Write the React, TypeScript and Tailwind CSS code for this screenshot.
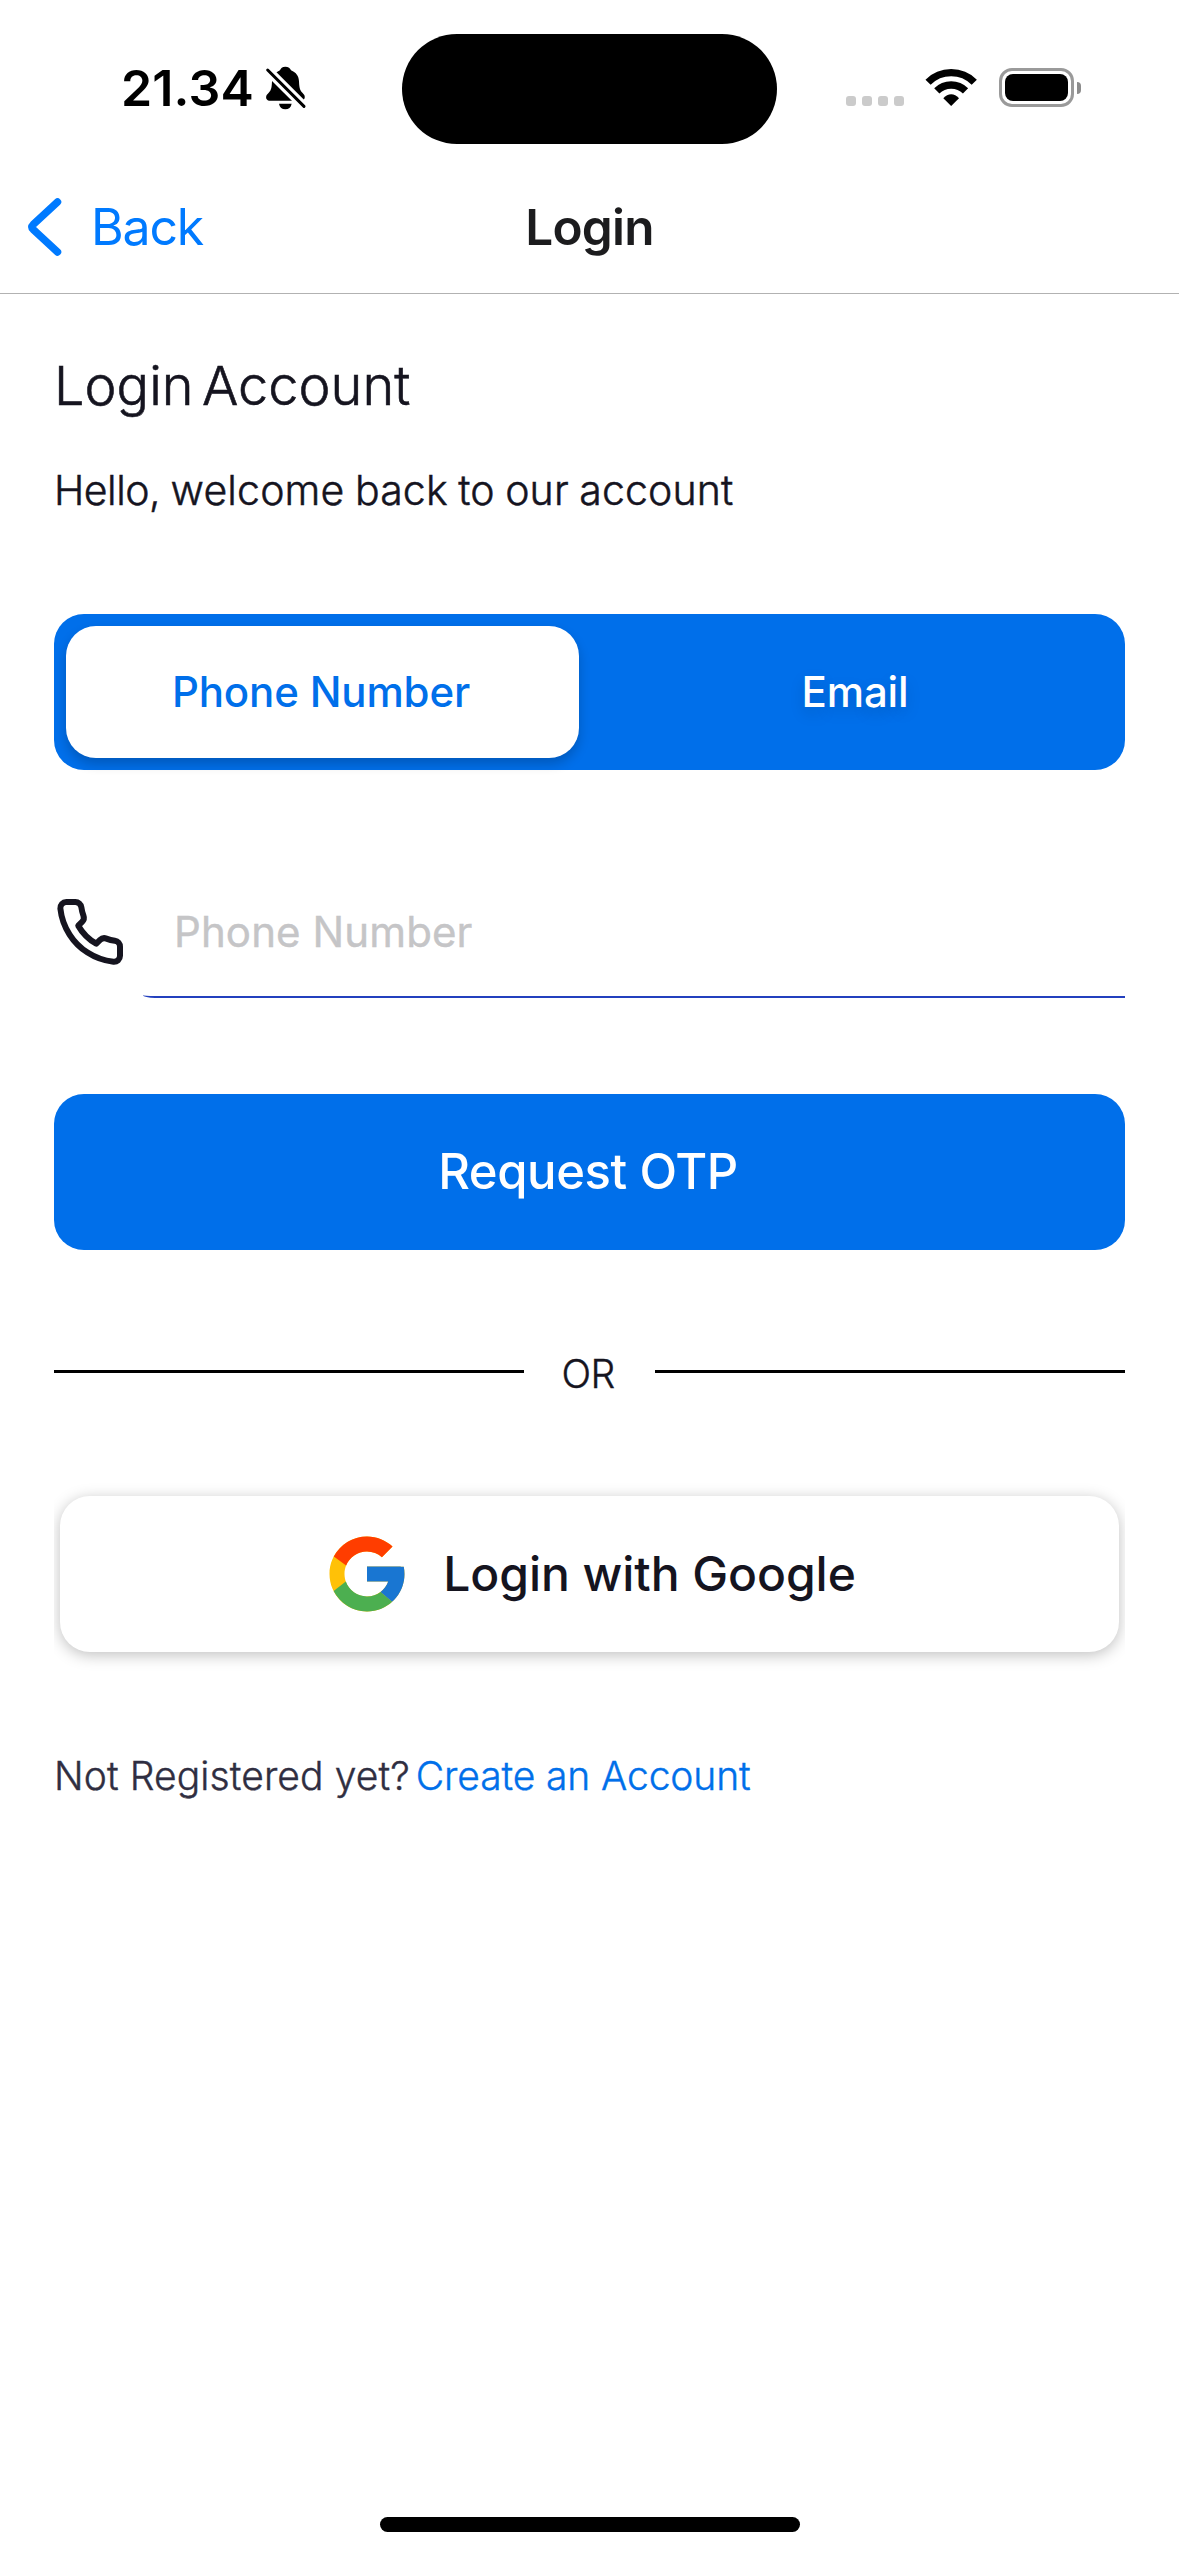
import type { ReactNode } from "react";
import { FcGoogle } from "react-icons/fc";
import { FiPhone } from "react-icons/fi";

function SilentBell() {
  return (
    <svg className="ml-[11px] h-[45px] w-[42px]" viewBox="524 136 126 135" aria-hidden="true">
      <path
        d="M585 141c-9 0-14 5-16 11-15 7-23 17-24 33-1 24-3 28-14 39-6 6-5 19 6 19h96c11 0 13-13 7-19-11-12-13-15-14-39-1-16-8-26-24-33-2-6-8-11-17-11z"
        fill="#000"
      />
      <path d="M566 252h38c-2 11-9 17-19 17s-17-6-19-17z" fill="#000" />
      <path d="M522 141L656 275" stroke="#fff" strokeWidth="28" />
      <path d="M532 151L641 260" stroke="#000" strokeWidth="9" strokeLinecap="round" />
    </svg>
  );
}

function Wifi() {
  return (
    <svg className="h-[39px] w-[52px]" viewBox="496 144 156 117" fill="none" stroke="#000" aria-hidden="true">
      <path d="M505.2 186.7A98 98 0 0 1 643.8 186.7" strokeWidth="22" />
      <path d="M531.4 212.9A61 61 0 0 1 617.6 212.9" strokeWidth="22" />
      <path d="M574.5 258L551 234.5C565 218.5 584 218.5 598 234.5Z" fill="#000" stroke="none" />
    </svg>
  );
}

function Battery() {
  return (
    <div className="flex items-center gap-[3px]">
      <div className="h-[39px] w-[75px] rounded-[13px] border-[3px] border-[#9a9a9a] p-[3px]">
        <div className="h-full w-full rounded-[8px] bg-black" />
      </div>
      <div className="h-[12px] w-[4px] rounded-r-full bg-[#8c8c8c]" />
    </div>
  );
}

function StatusBar() {
  return (
    <div className="grid h-[162px] grid-cols-[402px_375px_402px] pt-[34px]">
      <div className="flex h-[107px] items-center pl-[121px]">
        <span className="text-[50px] font-semibold leading-none tracking-[0.15px] text-black">21.34</span>
        <SilentBell />
      </div>
      <div className="h-[110px] rounded-full bg-black" />
      <div className="flex h-[107px] items-center pl-[69px]">
        <div className="flex gap-[6px] pt-[27px]">
          {[0, 1, 2, 3].map((dot) => (
            <span key={dot} className="size-[10px] rounded-[3px] bg-[#cbcbcb]" />
          ))}
        </div>
        <div className="ml-[21px] mr-[22px]">
          <Wifi />
        </div>
        <Battery />
      </div>
    </div>
  );
}

function NavBar() {
  return (
    <header className="grid h-[132px] grid-cols-3 items-center border-b border-[#b2b2b2]">
      <a href="#back" className="flex items-center pl-[24px] text-[#007aff]">
        <svg className="mb-[2px] h-[64px] w-[40px]" viewBox="0 0 40 64" fill="none" aria-hidden="true">
          <path
            d="M33.5 7L9.2 29.6Q6.8 32 9.2 34.4L33.5 57"
            stroke="currentColor"
            strokeWidth="7.5"
            strokeLinecap="round"
            strokeLinejoin="round"
          />
        </svg>
        <span className="mb-px ml-[27px] text-[50px] leading-none tracking-[-1.2px]">Back</span>
      </a>
      <h1 className="text-center text-[49.5px] font-semibold leading-none tracking-[-0.8px] text-[#1c1c1e]">Login</h1>
    </header>
  );
}

function Tab({ active = false, children }: { active?: boolean; children: ReactNode }) {
  return (
    <button
      className={
        active
          ? "flex-1 rounded-[30px] bg-white pb-[2px] pr-[3px] text-[42px] font-medium tracking-[-0.15px] text-[#006fea] shadow-[0_6px_12px_rgba(0,0,0,0.2)]"
          : "flex-1 rounded-[30px] pb-[2px] pr-[3px] text-[42px] font-medium tracking-[-0.15px] text-white [text-shadow:0_6px_15px_rgba(0,0,0,0.15)]"
      }
    >
      {children}
    </button>
  );
}

export default function App() {
  return (
    <div className="flex h-[2556px] w-[1179px] flex-col bg-white font-['Inter',sans-serif]">
      <StatusBar />
      <NavBar />
      <main className="flex flex-1 flex-col px-[54px] pt-[59px] text-[#15141f]">
        <h2 className="h-[66px] text-[54px] font-light leading-[66px] tracking-[0.05px] [-webkit-text-stroke:0.6px_currentColor] [word-spacing:-7px]">
          Login Account
        </h2>
        <p className="mt-[46px] h-[50px] text-[41px] font-light leading-[50px] [-webkit-text-stroke:0.5px_currentColor]">
          <span className="tracking-[-0.5px]">Hello,</span>
          <span className="tracking-[0.15px] [word-spacing:-1.2px]"> welcome back to our account</span>
        </p>

        <div className="mt-[99px] flex h-[156px] gap-[21px] rounded-[30px] bg-[#006fea] p-3">
          <Tab active>Phone Number</Tab>
          <Tab>Email</Tab>
        </div>

        <div className="mt-24 flex h-[132px] items-center">
          <FiPhone className="size-[72px] shrink-0" />
          <input
            type="tel"
            placeholder="Phone Number"
            className="ml-[17px] h-full min-w-0 flex-1 rounded-bl-[12px_3px] border-b-2 border-[#2340be] pl-[31px] text-[42px] tracking-[0.1px] outline-none placeholder:text-[#c5c5c7] placeholder:[-webkit-text-stroke:0.4px_#c5c5c7]"
          />
        </div>

        <button className="mt-24 h-[156px] rounded-[30px] bg-[#006fea] pr-[3px] text-[49px] font-medium tracking-[-0.4px] text-white">
          Request OTP
        </button>

        <div className="mt-24 flex h-[54px] items-start">
          <span className="mt-6 h-[3px] w-[470px] bg-black" />
          <span className="flex-1 pr-[3px] text-center text-[39px] font-light leading-[56px] tracking-[-0.6px] [-webkit-text-stroke:0.4px_currentColor]">
            OR
          </span>
          <span className="mt-6 h-[3px] w-[470px] bg-black" />
        </div>

        <div className="mt-24 overflow-x-clip px-1.5">
          <button className="flex h-[156px] w-full items-center justify-center rounded-[30px] bg-white pr-px shadow-[0_3px_15px_rgba(0,0,0,0.25)]">
            <FcGoogle className="size-[90px]" />
            <span className="ml-[31px] text-[48px] font-medium tracking-[-0.05px]">Login with Google</span>
          </button>
        </div>

        <p className="mt-24 flex h-[56px] gap-[6px] text-[39px] font-light leading-[56px] text-[#2f2e41] [-webkit-text-stroke:0.4px_currentColor]">
          <span className="tracking-[0.1px]">Not Registered yet?</span>
          <a href="#register" className="tracking-[-0.12px] text-[#006fea]">
            Create an Account
          </a>
        </p>
      </main>
      <div className="mx-auto mb-6 h-[15px] w-[420px] rounded-full bg-black" />
    </div>
  );
}
